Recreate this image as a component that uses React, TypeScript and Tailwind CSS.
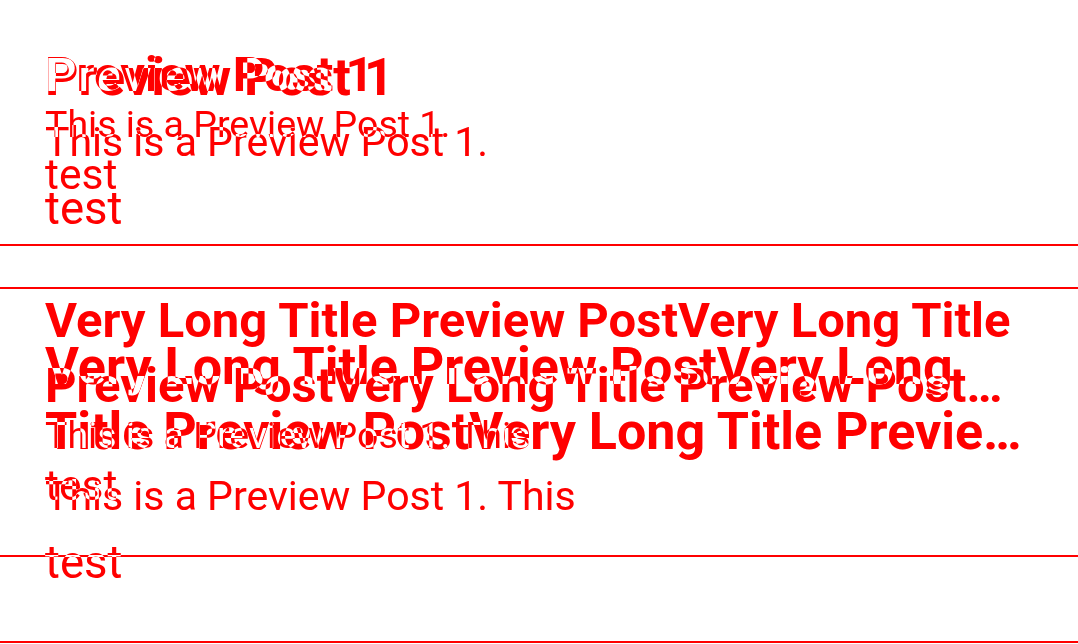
import React from "react";

const longTitle =
  "Very Long Title Preview PostVery Long Title Preview PostVery Long Title Preview PostVery Long Title Preview Post";

type Post = { title: string; desc: string; tag: string };

const posts: Post[] = [
  { title: "Preview Post 1", desc: "This is a Preview Post 1.", tag: "test" },
  { title: longTitle, desc: "This is a Preview Post 1. This", tag: "test" },
];

function LayerA() {
  return (
    <div className="flex flex-col text-[#ff0000]">
      {posts.map((p, i) => (
        <article key={i} className="border-b-2 border-[#ff0000] px-[45px] pt-[42px] pb-[45px]">
          <h2 className="line-clamp-2 text-[49px] font-bold leading-[65px]">
            {p.title.split("PostVery").join("Post\u200BVery")}
          </h2>
          <p className="-mt-[4px] whitespace-nowrap text-[37.5px] leading-[43px]">{p.desc}</p>
          <p className="mt-[4px] text-[42.5px] leading-[49px]">{p.tag}</p>
        </article>
      ))}
    </div>
  );
}

function LayerB() {
  return (
    <div className="pointer-events-none absolute inset-0 flex flex-col text-[#00ffff] mix-blend-difference">
      {posts.map((p, i) => (
        <article key={i} className="border-b-2 border-[#00ffff] px-[45px] pt-[45px] pb-[52px]">
          <h2 className="line-clamp-2 text-[52px] font-bold leading-[65px]">{p.title}</h2>
          <p className="mt-[9px] whitespace-nowrap text-[41px] leading-[47px]">{p.desc}</p>
          <p className="mt-[16px] text-[45.5px] leading-[53px]">{p.tag}</p>
        </article>
      ))}
    </div>
  );
}

export default function App() {
  return (
    <div className="relative isolate h-[644px] w-full overflow-hidden bg-white font-['Roboto',sans-serif]">
      <LayerA />
      <LayerB />
    </div>
  );
}
